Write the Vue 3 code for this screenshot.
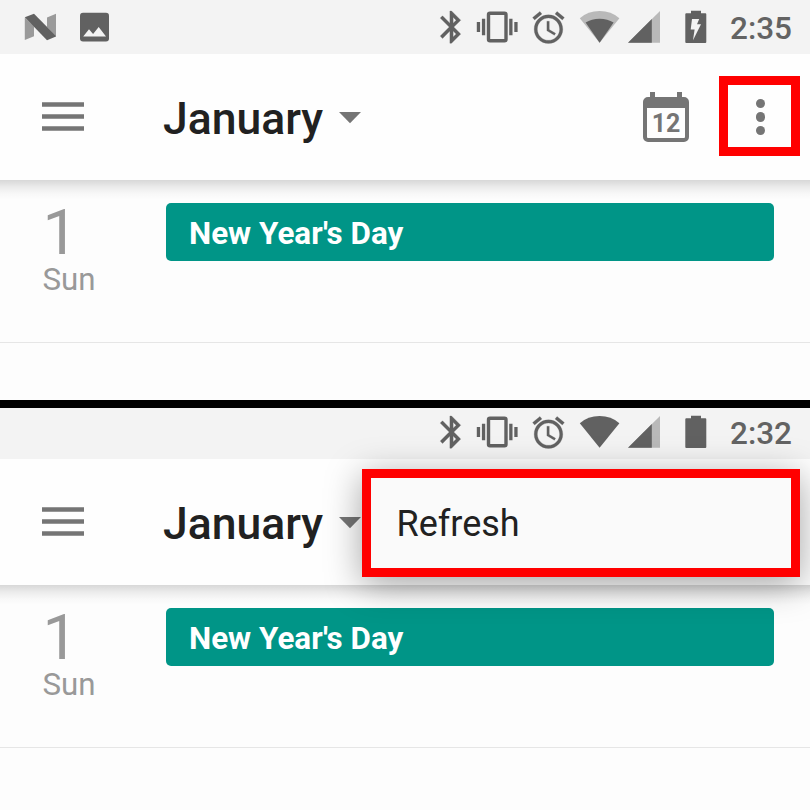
<script setup>
const screens = [
  { id: 'first', time: '2:35', charging: true, partialWifi: true, notifications: true, menuOpen: false },
  { id: 'second', time: '2:32', charging: false, partialWifi: false, notifications: false, menuOpen: true },
]
</script>

<template>
  <main class="page">
    <section v-for="s in screens" :key="s.id" class="screen" :class="s.id">
      <header class="status">
        <div class="notifications">
          <template v-if="s.notifications">
            <svg width="32" height="54" viewBox="24 0 32 54">
              <path d="M24.8 17.4L34 26.5v9.8l-9.2 3.8zM47 17.4l9.2-3.7v22.8L47 27z" fill="#9a9a9a" />
              <path d="M24.8 17.2L34 13.7l22.2 22.6L47 40.2z" fill="#616161" />
            </svg>
            <svg width="30" height="54" viewBox="80 0 30 54">
              <rect x="80" y="12.8" width="29" height="28.6" rx="3" fill="#616161" />
              <path d="M83.2 36.6l5.8-7.4 4.1 4.9 5.6-7.2 7.3 9.7z" fill="#f3f3f3" />
            </svg>
          </template>
        </div>
        <div class="indicators">
          <svg width="220" height="54" viewBox="436 0 220 54" class="radio">
            <path transform="translate(432.2 7.8) scale(1.61)" d="M17.71 7.71L12 2h-1v7.59L6.41 5 5 6.41 10.59 12 5 17.59 6.41 19 11 14.41V22h1l5.71-5.71-4.3-4.29 4.3-4.29zM13 5.83l1.88 1.88L13 9.59V5.83zm1.88 10.46L13 18.17v-3.76l1.88 1.88z" stroke="#616161" stroke-width=".2" />
            <path d="M476.8 22h3.3v10h-3.3zM481.9 18.8h3.3v16.4h-3.3zM509.2 18.8h3.3v16.4h-3.3zM514.3 22h3.3v10h-3.3z" />
            <rect x="488.5" y="13.3" width="17.5" height="27.4" rx="1.5" fill="none" stroke="#616161" stroke-width="3.4" />
            <path transform="translate(529.4 8.5) scale(1.59)" d="M22 5.72l-4.6-3.86-1.29 1.53 4.6 3.86L22 5.72zM7.88 3.39L6.6 1.86 2 5.71l1.29 1.53 4.59-3.85zM12.5 8H11v6l4.75 2.85.75-1.23-4-2.37V8zM12 4c-4.97 0-9 4.03-9 9s4.02 9 9 9c4.97 0 9-4.03 9-9s-4.03-9-9-9zm0 16c-3.87 0-7-3.13-7-7s3.13-7 7-7 7 3.13 7 7-3.13 7-7 7z" stroke="#616161" stroke-width=".15" />
            <path d="M599.6 42.8L579.8 18.2Q588 11 599.6 11T619.4 18.2z" :fill="s.partialWifi ? '#b9b9b9' : '#616161'" />
            <path v-if="s.partialWifi" d="M599.6 42.8L585.6 22.6Q591.5 18.8 599.6 18.8T613.6 22.6z" />
          </svg>
          <svg class="signal" width="32" height="54" viewBox="628 0 32 54">
            <path d="M628 42.8L660 11v31.8z" fill="#b9b9b9" />
            <path d="M628 42.8L651.8 19.1v23.7z" fill="#616161" />
          </svg>
          <svg class="battery" width="22" height="54" viewBox="685 0 22 54">
            <path d="M691 10.7h10v2.6h4.3q1 0 1 1V42q0 1-1 1h-19q-1 0-1-1V14.300q0-1 1-1h4.700z" fill="#616161" />
            <path v-if="s.charging" d="M692 19h7.200l-2.200 5.300h4L693 40.200l1.600-10.800H690.700z" fill="#f3f3f3" />
          </svg>
          <span class="time">{{ s.time }}</span>
        </div>
      </header>

      <nav class="appbar">
        <svg width="42" height="30" viewBox="0 0 42 30">
          <path d="M0 .2h42v4.600H0zM0 12.200h42v4.600H0zM0 24.200h42v4.600H0z" fill="#757575" />
        </svg>
        <h1 class="month">January</h1>
        <svg class="caret" width="22" height="12" viewBox="0 0 22 12">
          <path d="M0 0h22L11 11.300z" fill="#757575" />
        </svg>
        <div v-if="!s.menuOpen" class="actions">
          <div class="today"><span>12</span></div>
          <div class="more"><i></i><i></i><i></i></div>
        </div>
        <div v-else class="popup">Refresh</div>
      </nav>

      <div class="day">
        <div class="date">
          <div class="number">1</div>
          <div class="weekday">Sun</div>
        </div>
        <div class="event">New Year's Day</div>
      </div>
    </section>
  </main>
</template>

<style>
body { margin: 0; background: #fdfdfd; }
</style>

<style scoped>
.page {
  width: 810px;
  height: 810px;
  overflow: hidden;
  background: #fdfdfd;
  font-family: Roboto, sans-serif;
}
svg { display: block; flex: none; }
.screen { height: 400px; overflow: hidden; }
.second { border-top: 8px solid #000; height: 402px; }
.status {
  height: 54px;
  display: flex;
  justify-content: space-between;
  align-items: flex-end;
  background: #f3f3f3;
  overflow: hidden;
}
.second .status { height: 51px; }
.notifications { display: flex; padding-left: 24px; gap: 24px; }
.indicators { display: flex; }
.radio { fill: #616161; margin-right: -28px; }
.battery { margin-left: 25px; }
.time {
  width: 80px;
  margin-left: 23px;
  line-height: 58px;
  height: 54px;
  font-size: 31.500px;
  font-weight: 500;
  color: #636363;
}
.appbar {
  position: relative;
  z-index: 1;
  height: 126px;
  box-sizing: border-box;
  padding-left: 42px;
  display: flex;
  align-items: center;
  background: #fefefe;
}
.month {
  margin: 4px 0 0 79px;
  width: 176px;
  font-size: 44.500px;
  line-height: 52px;
  font-weight: 500;
  color: #212121;
}
.caret { margin-top: 2px; }
.actions {
  margin-left: auto;
  display: flex;
  align-items: center;
  padding-right: 10.500px;
}
.today {
  position: relative;
  width: 45.400px;
  height: 45.300px;
  box-sizing: border-box;
  margin: 5px 30.300px 0 0;
  border: 4.400px solid #757575;
  border-top-width: 11px;
  border-radius: 5px;
  text-align: center;
  font-size: 25px;
  font-weight: 700;
  line-height: 31px;
  color: #757575;
}
.today::before, .today::after {
  content: '';
  position: absolute;
  top: -16px;
  width: 5px;
  height: 6px;
  background: #757575;
}
.today::before { left: 3px; }
.today::after { right: 3px; }
.more {
  width: 80.500px;
  height: 80.500px;
  box-sizing: border-box;
  margin-top: -2px;
  border: 9px solid #f00;
  display: flex;
  flex-direction: column;
  align-items: center;
  justify-content: center;
  gap: 4.200px;
  padding-top: 2px;
  padding-left: 2px;
}
.more i { width: 9.300px; height: 9.300px; border-radius: 50%; background: #757575; }
.popup {
  position: absolute;
  left: 361.500px;
  top: 10px;
  width: 438px;
  height: 108px;
  box-sizing: border-box;
  border: 9px solid #f00;
  padding-left: 26px;
  background: #fafafa;
  box-shadow: 0 7px 36px rgba(0, 0, 0, 0.36);
  font-size: 36px;
  line-height: 92px;
  color: #212121;
}
.day {
  height: 163px;
  box-sizing: border-box;
  border-bottom: 1px solid #e6e6e6;
  display: flex;
  align-items: flex-start;
  background: linear-gradient(rgba(0, 0, 0, 0.15), rgba(0, 0, 0, 0.07) 7px, rgba(0, 0, 0, 0.02) 14px, transparent 20px);
}
.date { width: 166px; padding: 30px 0 0 42.500px; box-sizing: border-box; color: #999; }
.number { font-size: 63px; line-height: 45px; }
.weekday { margin-top: 6px; font-size: 31.300px; line-height: 37px; }
.event {
  width: 608px;
  height: 58.500px;
  margin-top: 22.500px;
  box-sizing: border-box;
  padding: 2px 0 0 23px;
  border-radius: 5px;
  background: #009587;
  color: #fff;
  font-size: 31.400px;
  line-height: 58px;
  font-weight: 700;
}
</style>
